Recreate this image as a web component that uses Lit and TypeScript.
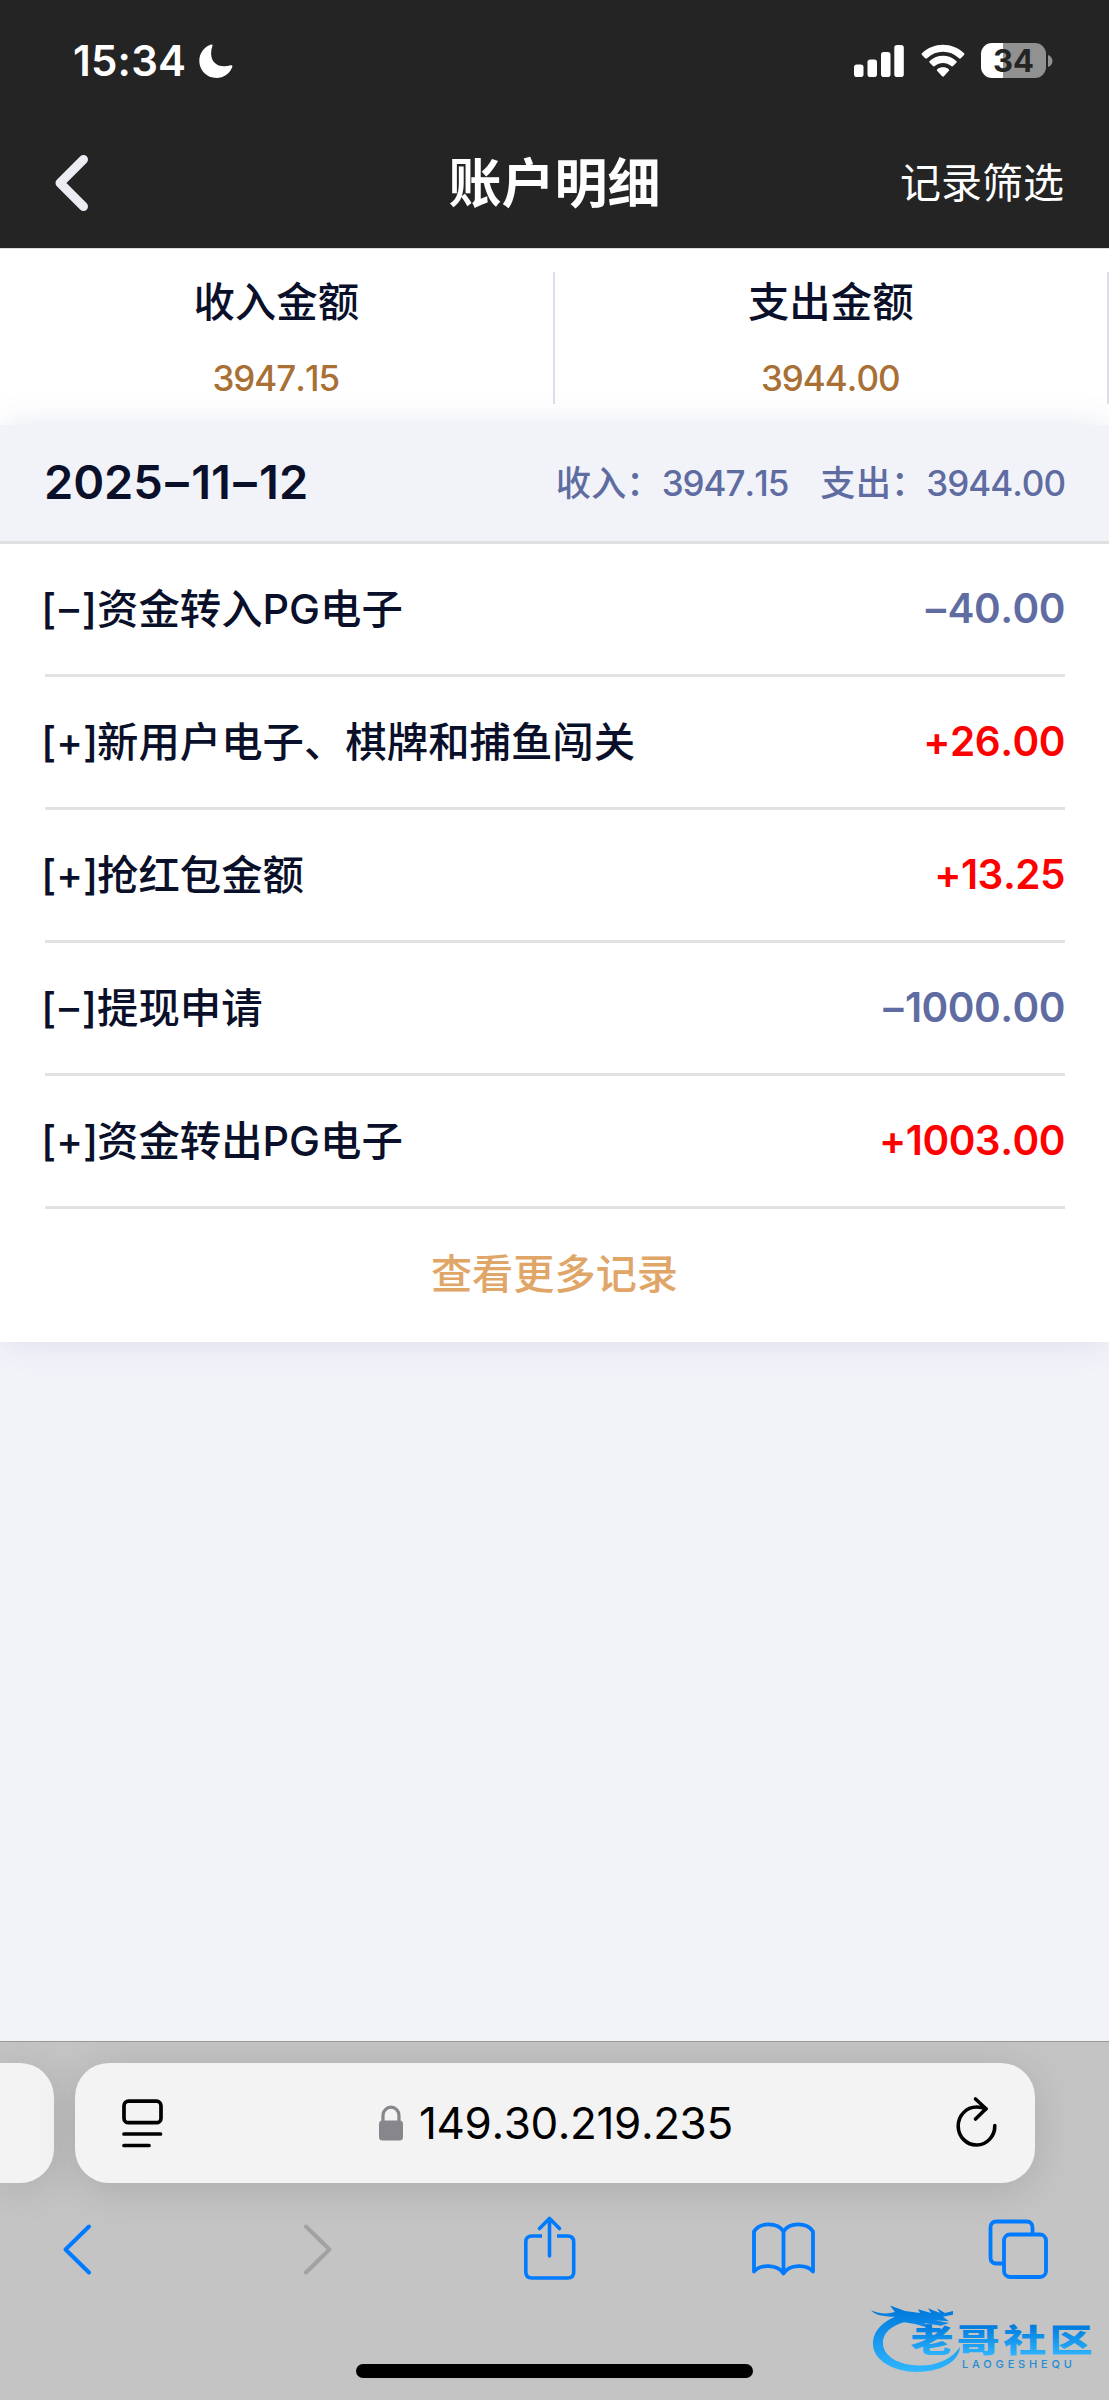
import { LitElement, html, css } from "lit";
import { customElement } from "lit/decorators.js";

interface Entry {
  sign: string;
  title: string;
  amount: string;
}

const ENTRIES: Entry[] = [
  { sign: "–", title: "资金转入PG电子", amount: "40.00" },
  { sign: "+", title: "新用户电子、棋牌和捕鱼闯关", amount: "26.00" },
  { sign: "+", title: "抢红包金额", amount: "13.25" },
  { sign: "–", title: "提现申请", amount: "1000.00" },
  { sign: "+", title: "资金转出PG电子", amount: "1003.00" },
];

@customElement("status-bar")
class StatusBar extends LitElement {
  static styles = css`
    :host { display: flex; align-items: center; height: 121px; padding: 0 56px 0 73px; box-sizing: border-box; color: #fff; }
    .time { font-size: 42px; font-weight: 600; line-height: 50px; letter-spacing: .2px; }
    .moon { width: 34px; height: 34px; margin-left: 13px; }
    .signal { width: 50px; height: 34px; margin-left: auto; }
    .wifi { width: 44px; height: 34px; margin-left: 17px; }
    .battery { width: 65px; height: 35px; margin-left: 16px; border-radius: 11px; background: linear-gradient(90deg, #fff 22px, #919191 22px); color: #242424; font-size: 31px; line-height: 35px; font-weight: 700; text-align: center; }
    .nub { width: 5px; height: 14px; margin-left: 2px; }
  `;
  render() {
    return html`
      <span class="time">15:34</span>
      <svg class="moon" viewBox="0 0 34 34"><path fill="#fff" d="M11.5 .7C13 .2 14 .8 13.300 2.400C12.500 4.600 12.100 6.800 12.100 9.200C12.100 17.300 17.200 22.300 25.200 22.300C27.500 22.300 29.500 21.900 31.400 21.300C33 20.800 33.800 21.700 33.200 23.200C30.600 29.700 24.700 34 17.500 34C7.800 34 .3 26.500 .3 16.800C.3 9.500 4.800 3.100 11.500 .7Z"/></svg>
      <svg class="signal" viewBox="0 0 50 34" fill="#fff">
        <rect x="0" y="20.500" width="9.500" height="12.500" rx="2.800"/><rect x="13.500" y="15.500" width="9.500" height="17.500" rx="2.800"/><rect x="27" y="8" width="9.500" height="25" rx="2.800"/><rect x="40.300" y="1" width="9.500" height="32" rx="2.800"/>
      </svg>
      <svg class="wifi" viewBox="0 0 44 34" fill="#fff">
        <path d="M1 9.200C12.500-2.200 31.500-2.200 43 9.200C43.600 9.800 43.600 10.400 43 11L39.800 14.200C39.200 14.800 38.600 14.800 38 14.200C29 5.600 15 5.600 6 14.200C5.400 14.800 4.800 14.800 4.200 14.200L1 11C.4 10.400 .4 9.800 1 9.200Z"/>
        <path d="M8.700 17C16 10 28 10 35.300 17C35.900 17.600 35.900 18.200 35.300 18.800L32 22.100C31.400 22.700 30.800 22.700 30.200 22.100C25.400 18 18.600 18 13.800 22.100C13.200 22.700 12.600 22.700 12 22.100L8.700 18.800C8.100 18.200 8.100 17.600 8.700 17Z"/>
        <path d="M16.300 25.200C19.500 22.700 24.500 22.700 27.700 25.200C28.300 25.800 28.300 26.300 27.700 26.900L22.900 32.200C22.300 32.800 21.700 32.800 21.100 32.200L16.300 26.900C15.700 26.300 15.700 25.800 16.300 25.200Z"/>
      </svg>
      <div class="battery">34</div>
      <svg class="nub" viewBox="0 0 5 14"><path fill="#919191" d="M0 1C6 3 6 11 0 13Z"/></svg>
    `;
  }
}

@customElement("browser-bar")
class BrowserBar extends LitElement {
  static styles = css`
    :host { display: flex; flex-direction: column; height: 359px; box-sizing: border-box; border-top: 1px solid #98989b; background: #c4c4c4; position: relative; overflow: hidden; }
    .tabs { display: flex; gap: 21px; padding-top: 21px; }
    .prev { flex: none; width: 54px; height: 120px; border-radius: 0 34px 34px 0; background: #f3f3f3; box-shadow: 0 6px 40px rgba(0,0,0,.13); }
    .address { flex: none; width: 960px; height: 120px; box-sizing: border-box; border-radius: 34px; background: #f3f3f3; box-shadow: 0 6px 40px rgba(0,0,0,.13); display: flex; align-items: center; padding: 0 36px 0 46px; }
    .reader { width: 44px; height: 50px; }
    .lock { width: 26px; height: 36px; margin-left: 213px; }
    .host { margin-left: 15px; font-size: 44px; line-height: 54px; letter-spacing: -.4px; font-kerning: none; color: #000; }
    .reload { width: 46px; height: 54px; margin-left: auto; }
    .tools { display: flex; padding: 30px 0 0 63px; height: 72px; align-items: center; }
    .tools svg { flex: none; height: 72px; overflow: visible; }
    .prevpage { width: 28px; }
    .nextpage { width: 28px; margin-left: 213px; }
    .share { width: 56px; margin-left: 189px; }
    .book { width: 64px; margin-left: 174px; }
    .windows { width: 62px; margin-left: 172px; }
    .home { width: 397px; height: 14px; border-radius: 7px; background: #000; margin: 79px auto 0; }
    .mark { position: absolute; left: 868px; top: 254px; width: 230px; height: 90px; }
    .name { font: 900 43px "Noto Sans CJK SC", sans-serif; }
    .latin { font: 500 11px Inter, sans-serif; }
  `;
  render() {
    return html`
      <div class="tabs">
        <div class="prev"></div>
        <div class="address">
          <svg class="reader" viewBox="0 0 44 50" fill="none" stroke="#000" stroke-width="3.700" stroke-linecap="round"><rect x="3" y="3.200" width="37" height="21.500" rx="4.500"/><path d="M3 36H39.500M3 47.500H28"/></svg>
          <svg class="lock" viewBox="0 0 26 36"><rect x="1" y="15.500" width="24" height="20" rx="3.500" fill="#87868b"/><path d="M5 17V10.500a8 8.300 0 0 1 16 0V17" fill="none" stroke="#87868b" stroke-width="3.200"/></svg>
          <span class="host">149.30.219.235</span>
          <svg class="reload" viewBox="0 0 46 54" fill="none" stroke="#000" stroke-width="3.600" stroke-linecap="round" stroke-linejoin="round"><path d="M33 12.800C30 11.500 27 11 23.500 11A18.300 19 0 1 0 41.800 29.500"/><path d="M22.500 3L33 12.700L22.500 23"/></svg>
        </div>
      </div>
      <div class="tools">
        <svg class="prevpage" viewBox="0 0 28 72" fill="none" stroke="#007aff" stroke-width="4" stroke-linecap="round" stroke-linejoin="round"><path d="M26 13.500L2.500 36.500L26 59.500"/></svg>
        <svg class="nextpage" viewBox="0 0 28 72" fill="none" stroke="#a2a2a2" stroke-width="4" stroke-linecap="round" stroke-linejoin="round"><path d="M2 13.500L25.500 36.500L2 59.500"/></svg>
        <svg class="share" viewBox="0 0 56 72" fill="none" stroke="#007aff" stroke-width="3.600" stroke-linecap="round" stroke-linejoin="round"><path stroke-linecap="butt" d="M21 23H11Q4.800 23 4.800 29V59Q4.800 65 11 65H46.500Q52.700 65 52.700 59V29Q52.700 23 46.500 23H36"/><path d="M28.500 43V6M18.500 15.500L28.500 5.500L38.500 15.500"/></svg>
        <svg class="book" viewBox="0 0 64 72" fill="none" stroke="#007aff" stroke-width="3.800" stroke-linejoin="round"><path d="M32.500 18.500C26.500 9 9 9 3 18.500V58.500C9 51 26.500 51 32.500 60.500C38.500 51 56 51 62 58.500V18.500C56 9 38.500 9 32.500 18.500V60"/></svg>
        <svg class="windows" viewBox="0 0 62 72" fill="none" stroke="#007aff" stroke-width="3.800"><rect x="17" y="21.500" width="42" height="42.500" rx="6"/><path d="M45.500 20V14.500Q45.500 8.500 39.500 8.500H9.500Q3.500 8.500 3.500 14.500V44.500Q3.500 50.500 9.500 50.500H15.500"/></svg>
      </div>
      <div class="home"></div>
      <svg class="mark" viewBox="0 0 230 90">
        <defs><linearGradient id="ring" x1="0" y1="8" x2="0" y2="76" gradientUnits="userSpaceOnUse"><stop offset="0" stop-color="#0078dc"/><stop offset="1" stop-color="#2fb6ff"/></linearGradient>
        <linearGradient id="ink" x1="0" y1="22" x2="0" y2="62" gradientUnits="userSpaceOnUse"><stop offset="0" stop-color="#007bdf"/><stop offset="1" stop-color="#2fb4fb"/></linearGradient></defs>
        <g fill="url(#ring)" transform="translate(0 5) scale(1 .92)">
          <path d="M27 17C12 24 4 35 5 48C6 65 27 78 52 77C75 76 91 65 92 50C84 63 68 71 51 70C32 70 16 61 15 47C14 35 23 27 36 23L47 25L63 30L56 24L73 27L81 24L67 21L81 22L75 17L85 15V11L77 13L69 8L72 13L60 8L63 13L50 9L52 13L37 11L22 5L27 12C18 15 9 13 3 10C7 16 18 17 27 17Z"/>
        </g>
        <text class="name" x="42.500" y="58" textLength="182" lengthAdjust="spacing" fill="url(#ink)" transform="translate(0 13.500) scale(1 .74)">老哥社区</text>
        <text class="latin" x="94" y="71.500" textLength="110" lengthAdjust="spacing" fill="#258bd5">LAOGESHEQU</text>
      </svg>
    `;
  }
}

@customElement("app-root")
class AppRoot extends LitElement {
  static styles = css`
    :host { display: flex; flex-direction: column; width: 1109px; height: 2400px; overflow: hidden; background: #f2f3f9; color: #0a1029; font-family: Inter, "Noto Sans CJK SC", sans-serif; }
    .head { background: #242424; height: 248px; flex: none; }
    .nav { display: grid; grid-template-columns: 240px 1fr 240px; align-items: center; height: 123px; color: #fff; }
    .back { width: 34px; height: 58px; margin-left: 55px; }
    .title { font-size: 53px; font-weight: 700; line-height: 80px; text-align: center; padding-top: 2px; }
    .filter { font-size: 41px; line-height: 60px; text-align: right; padding-right: 45px; font-weight: 400; }
    .summary { flex: none; display: grid; grid-template-columns: 1fr 1fr; height: 177px; background: #fff; padding-top: 23px; box-sizing: border-box; border-top: 1px solid #dcdcdc; }
    .total { height: 132px; box-sizing: border-box; border-right: 2.500px solid #d9dfed; text-align: center; display: flex; flex-direction: column; }
    .label { font-size: 41.400px; line-height: 60px; font-weight: 500; }
    .value { font-size: 35px; line-height: 44px; color: #a87035; margin-top: 24px; padding-right: 1px; font-weight: 500; letter-spacing: -1px; font-kerning: none; }
    .day { flex: none; background: #fff; box-shadow: 0 0 34px -4px rgba(60,75,140,.17); }
    .dayhead { display: flex; justify-content: space-between; align-items: center; height: 119px; box-sizing: border-box; padding: 0 44px 3px 44px; background: #f2f3f9; border-bottom: 3px solid #e0e0e1; }
    .date { font-size: 47px; font-weight: 600; line-height: 60px; font-kerning: none; font-feature-settings: "calt" 0; letter-spacing: -.1px; }
    .dash { margin: 0 2.500px; }
    .sums { display: flex; gap: 32px; font-size: 35.300px; line-height: 50px; color: #5f6ca2; font-weight: 500; padding-top: 4px; }
    .num { font-size: 35px; letter-spacing: -1px; font-kerning: none; }
    .row { display: flex; justify-content: space-between; align-items: center; height: 133px; box-sizing: border-box; margin: 0 44px 0 45px; border-bottom: 3px solid #e2e2e2; font-size: 41.400px; line-height: 60px; font-weight: 500; }
    .entry { display: flex; }
    .marker { display: flex; justify-content: space-between; width: 56px; margin: 0 0 0 -4px; font-feature-settings: "calt" 0; }
    .sign { font-size: 40px; }
    .amount { font-size: 40.500px; font-weight: 600; color: #5f6ca2; font-kerning: none; font-feature-settings: "calt" 0; letter-spacing: -.5px; }
    .minus { margin-right: 2px; }
    .plus { color: #ff0000; }
    .more { height: 133px; line-height: 131px; text-align: center; color: #dfa668; font-size: 41.200px; font-weight: 500; }
    .fill { flex: 1; }
    browser-bar { flex: none; }
  `;
  render() {
    return html`
      <div class="head">
        <status-bar></status-bar>
        <div class="nav">
          <svg class="back" viewBox="0 0 34 58" fill="none" stroke="#ebecf4" stroke-width="9" stroke-linecap="round" stroke-linejoin="round"><path d="M28.500 5.500L5 29L28.500 52.500"/></svg>
          <div class="title">账户明细</div>
          <div class="filter">记录筛选</div>
        </div>
      </div>
      <div class="summary">
        <div class="total"><span class="label">收入金额</span><span class="value">3947.15</span></div>
        <div class="total"><span class="label">支出金额</span><span class="value">3944.00</span></div>
      </div>
      <div class="day">
        <div class="dayhead">
          <span class="date">2025<span class="dash">–</span>11<span class="dash">–</span>12</span>
          <div class="sums"><span>收入：<span class="num">3947.15</span></span><span>支出：<span class="num">3944.00</span></span></div>
        </div>
        ${ENTRIES.map(
          (e) => html`<div class="row"><div class="entry"><span class="marker"><span>[</span><span class="sign">${e.sign}</span><span>]</span></span><span>${e.title}</span></div><span class="amount ${e.sign === "+" ? "plus" : ""}"><span class=${e.sign === "+" ? "" : "minus"}>${e.sign}</span>${e.amount}</span></div>`
        )}
        <div class="more">查看更多记录</div>
      </div>
      <div class="fill"></div>
      <browser-bar></browser-bar>
    `;
  }
}
